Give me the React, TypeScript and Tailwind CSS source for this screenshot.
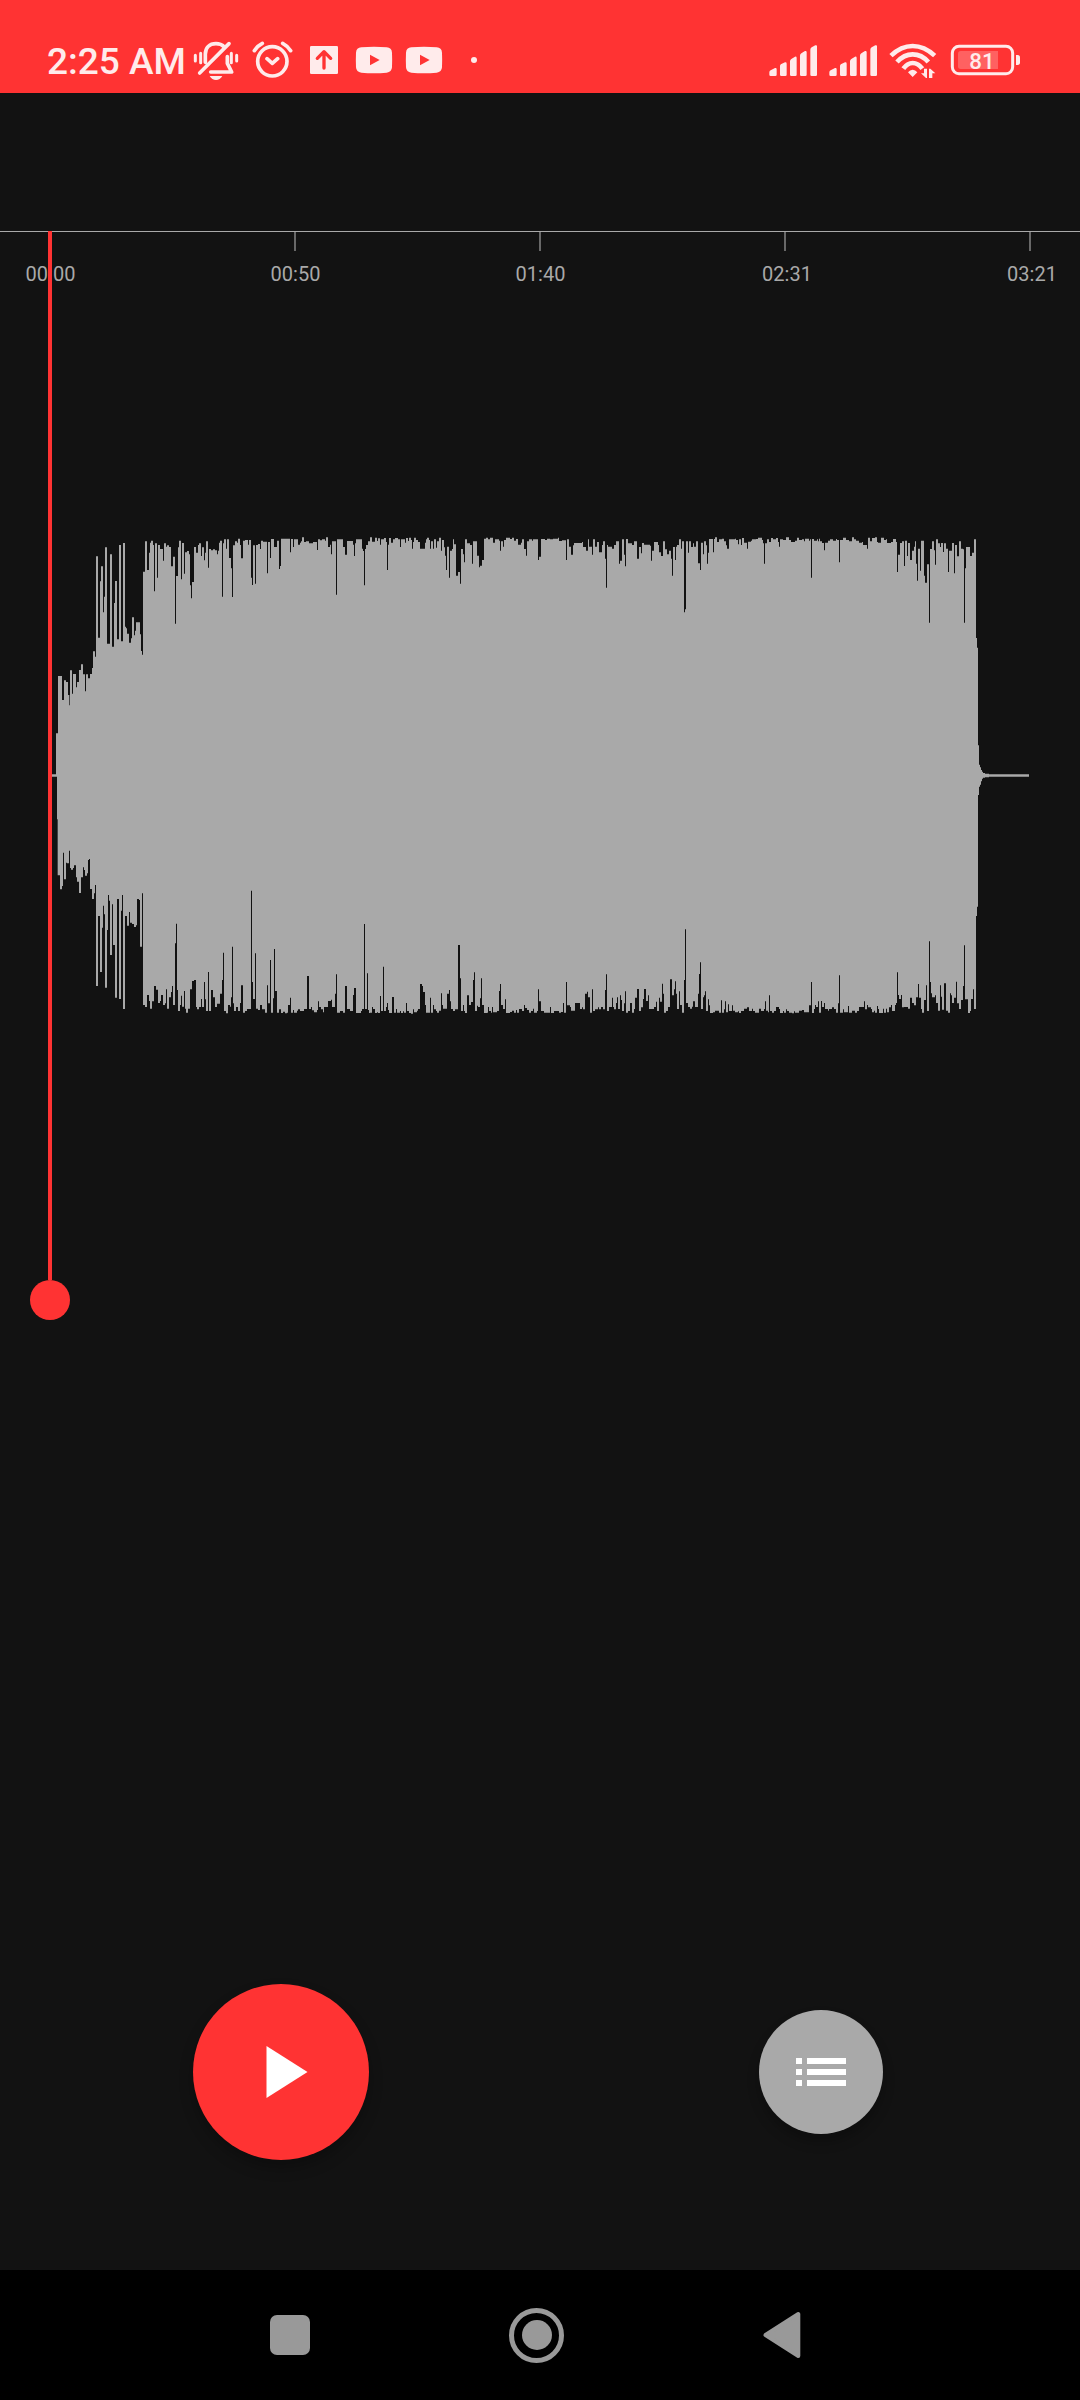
import type { ReactNode } from 'react';

// Envelope breakpoints as "x,level" pairs in thirds of a pixel; a level holds until the next pair.
const TOP: [number, string][] = [
  [0, `60,763 78,640 84,468 96,540 102,481 108,486 114,525 118,556 120,451 126,521 129,462 138,502 141,486 147,450 153,433 159,463 165,514 168,463 174,475 180,462 186,444 189,394 195,410 198,109 204,353 210,184 213,139 219,277 222,230 225,82 231,371 240,103 246,380 252,249 255,183 261,358 267,75 273,364 279,69 285,320 288,325 291,341 297,368 303,355 306,292 312,346 315,332 318,307 330,343 333,393 336,404 339,155 345,64 351,150 357,98 360,68 363,62 369,75 372,214 375,70 381,173 384,75 390,87 399,122 402,70 408,80 411,76 417,81 423,139 429,110 435,311 438,168 444,82 447,62 453,178 456,69 462,161 465,97 471,93 477,103 480,196 483,235 486,186 492,81 498,98 504,75 507,70 513,108 516,82 522,121 525,98 528,64 534,143 537,87 543,91 549,88 555,91 561,103 564,92 567,68 570,62 576,230 579,70 582,58 588,86 591,58 597,114 603,145 606,231 609,76 615,64 621,68 624,56 630,75 633,115 639,62 645,60 654,74 657,60 663,173 666,195 669,76 675,191 678,75 684,72 690,87 693,62 699,65 711,160 714,66 720,114 723,57 732,81 741,62 747,147 750,138 753,56 780,97 783,57 789,81 792,58 804,74 810,68 813,64 816,52 822,66 828,64 837,70 849,66 861,90 864,58 870,61 876,58 885,62 888,52 894,81 900,74 903,103 906,64 918,224 921,58 939,81 945,104 951,63 969,74 972,108 975,70 978,58 996,86 999,93 1002,196 1005,87 1008,75 1014,64`],
  [1020, `0,52 6,65 15,53 21,63 24,55 30,74 33,58 42,54 48,66 51,150 54,74 57,54 63,68 69,58 75,54 84,58 90,81 93,58 105,68 108,54 114,63 117,53 123,60 126,86 129,66 132,53 138,60 144,66 150,86 165,68 168,58 171,53 177,60 180,86 183,64 189,86 192,58 198,83 201,64 207,53 213,92 216,60 222,82 225,107 228,150 231,80 237,173 240,92 246,87 249,58 252,73 258,167 264,156 270,191 273,87 279,103 282,127 285,58 291,70 300,75 306,131 309,64 321,107 327,142 330,137 336,120 342,56 348,53 354,58 360,53 369,68 375,58 387,62 390,92 393,64 399,80 402,60 408,53 420,57 426,53 432,62 438,57 444,74 453,68 456,58 462,87 468,107 471,64 477,58 486,62 489,58 504,120 507,110 513,57 525,60 531,56 540,58 549,56 564,53 567,63 576,61 588,120 591,58 597,80 603,104 609,76 612,69 636,66 639,81 648,92 654,58 657,80 666,104 669,58 675,80 681,66 687,97 696,75 699,64 705,116 708,203 711,75 714,80 726,86 732,75 738,64 747,131 750,122 756,58 762,104 765,139 768,57 774,70 786,75 792,64 801,116 807,81 813,100 816,69 822,74 840,77 843,122 846,92 852,66 864,75 867,97 873,108 879,64 885,88 891,103 897,92 903,116 906,167 909,81 915,120 918,80 921,75 927,58 933,86 936,64 942,277 945,268 948,64 954,98 957,64 963,81 969,70 972,80 978,64 984,130`],
  [2010, `0,150 3,68 9,103 12,64 18,76 21,131 24,98 27,57 39,97 42,57 45,52 51,66 57,58 66,56 72,64 78,76 81,86 87,58 105,56 108,60 114,73 117,58 123,75 126,54 132,68 141,86 144,65 153,62 156,58 168,57 174,53 186,60 189,70 192,131 195,70 201,58 207,66 213,54 219,58 228,54 234,66 237,80 240,58 249,60 258,52 267,60 273,66 285,62 291,53 297,60 306,58 312,64 315,56 327,62 330,58 333,173 336,57 342,62 351,58 354,64 357,56 360,64 366,69 372,91 375,68 384,62 390,58 399,62 408,57 411,60 417,127 420,60 429,53 438,60 447,64 456,52 462,58 468,62 477,68 486,66 489,75 501,86 504,53 510,64 516,54 525,52 531,66 534,68 543,53 552,60 558,58 561,69 573,66 579,57 588,66 591,156 594,104 600,69 606,64 612,138 615,62 621,108 624,69 630,120 636,92 642,80 645,64 648,131 651,182 654,86 660,152 663,62 672,167 675,188 681,133 687,308 690,87 696,64 702,91 705,134 708,58 714,70 720,81 723,69 729,96 732,70 738,86 744,156 747,92 756,69 762,160 765,75 771,109 777,64 783,86 789,88 792,308 795,145 798,81 810,108 816,98 822,58 828,354 831,383 834,676 837,734 840,742 843,750 846,755 849,759 855,761 867,763 987,763`],
];
const BOTTOM: [number, string][] = [
  [0, `60,-10 81,118 83,286 90,328 96,318 99,218 102,298 108,248 111,250 117,212 120,264 123,269 129,264 132,256 138,292 141,305 147,339 153,292 159,262 162,270 165,287 171,280 174,240 177,237 180,327 186,357 192,340 195,315 198,618 204,408 210,576 216,443 219,377 222,403 225,623 231,450 234,345 237,362 240,525 246,373 249,495 255,653 261,357 267,657 273,392 276,345 279,687 285,408 291,437 297,396 300,428 306,432 312,441 318,436 321,357 327,360 330,500 336,340 339,675 345,681 351,645 357,663 360,686 366,664 372,618 378,629 384,669 390,663 393,645 399,675 405,670 408,628 411,686 417,652 423,636 426,618 429,675 435,490 438,431 441,630 444,693 450,675 453,647 456,680 462,633 465,686 468,698 474,686 480,628 486,603 492,600 498,681 501,688 507,681 513,657 516,681 522,606 525,658 528,693 534,576 537,693 543,630 549,652 555,681 561,671 570,641 576,600 579,518 582,693 588,700 594,675 600,680 603,652 606,500 609,670 612,693 618,681 624,693 630,669 633,616 639,698 645,693 651,687 663,332 666,606 669,657 675,520 678,686 684,690 690,675 696,688 705,698 711,616 714,670 720,540 723,698 729,655 732,507 735,633 741,698 747,688 753,699 759,695 765,700 771,698 774,675 780,653 783,698 789,690 792,698 801,692 804,688 810,693 822,687 831,588 837,687 843,681 846,691 852,697 861,690 864,664 867,681 873,688 879,697 882,681 894,663 903,659 906,681 915,641 918,583 921,698 930,693 939,698 945,618 951,687 960,693 969,645 972,624 978,699 993,693 996,687 1002,432 1005,687 1011,580 1014,690 1017,699`],
  [1020, `0,698 6,681 9,687 15,699 21,697 24,699 30,648 33,693 39,560 42,693 48,681 51,669 54,690 57,699 66,651 72,698 78,687 81,698 90,693 93,699 99,694 102,698 108,669 111,693 117,699 123,701 129,688 132,697 141,692 144,687 150,612 156,618 159,636 165,675 168,698 180,653 183,698 189,675 192,688 198,693 201,698 207,692 213,640 216,675 219,686 231,641 237,630 240,664 243,687 249,693 255,688 264,495 270,595 273,693 279,675 282,693 285,699 291,646 297,675 303,666 309,600 312,577 315,693 321,677 324,681 330,655 333,595 336,675 342,699 351,698 354,681 357,693 363,698 366,681 369,697 381,693 387,633 390,612 393,675 399,687 405,658 408,699 420,696 426,692 432,698 438,690 441,698 447,687 456,693 462,675 465,684 471,690 477,698 483,693 489,686 492,698 501,693 504,628 507,664 513,693 522,698 540,681 543,699 552,693 567,698 573,696 579,669 582,698 588,606 591,676 600,681 603,692 615,669 630,687 636,682 639,688 645,641 651,635 654,652 660,698 666,628 669,693 675,688 684,682 687,688 693,681 699,688 705,630 708,583 711,693 717,681 726,653 729,681 732,688 738,669 741,652 744,687 750,646 753,660 756,693 762,670 765,634 768,698 774,693 780,669 786,698 792,687 795,653 801,627 807,693 813,682 819,657 822,627 828,663 834,646 837,687 852,681 858,665 861,693 867,653 870,665 876,611 879,641 882,698 888,693 894,681 900,598 906,646 912,628 915,604 918,641 921,687 927,634 930,675 936,698 942,600 945,448 948,669 954,681 960,686 966,680 969,664 975,681 984,641 987,582`],
  [2010, `0,547 3,687 9,652 12,646 15,634 18,693 24,658 27,676 30,699 39,697 45,692 57,698 63,661 66,698 72,688 75,664 78,697 84,673 87,693 96,676 99,692 105,697 114,694 117,699 123,693 132,686 141,682 147,693 156,686 159,693 165,698 177,686 183,693 192,687 195,664 198,692 204,697 207,646 210,693 216,698 222,693 228,681 237,687 240,699 249,693 252,698 258,688 261,693 267,698 276,700 282,694 285,698 297,692 306,690 312,697 327,676 333,606 336,699 342,687 345,675 348,681 354,664 357,698 363,663 366,681 372,669 375,687 384,692 387,687 396,682 402,687 408,698 414,670 417,586 420,698 429,688 432,697 444,678 447,698 456,692 465,698 471,693 477,681 492,664 495,688 501,675 504,682 513,687 516,697 522,692 525,698 531,678 534,687 537,699 549,686 552,698 558,686 561,697 567,682 573,675 576,693 585,675 588,669 591,577 594,645 597,657 603,645 606,682 612,681 624,686 630,653 636,669 642,676 648,652 654,612 657,653 663,687 666,698 672,660 678,616 681,693 687,484 690,606 693,640 696,652 705,646 708,669 714,692 720,616 723,650 726,689 732,610 738,692 744,698 750,640 753,646 756,669 762,653 768,605 771,670 777,687 783,660 789,618 792,496 795,658 804,699 810,693 813,657 819,628 822,687 828,408 831,380 834,45 837,20 840,14 843,4 846,-4 849,-7 855,-8 867,-10 987,-10`],
];

function steps(blocks: [number, string][], dy: number): [number, number][] {
  const points: [number, number][] = [];
  for (const [offset, data] of blocks) {
    for (const pair of data.split(' ')) {
      const [x, y] = pair.split(',').map(Number);
      const last = points[points.length - 1];
      if (last) points.push([x + offset, last[1]]);
      points.push([x + offset, y + dy]);
    }
  }
  return points;
}

const WAVE = 'M' + [...steps(TOP, 0), ...steps(BOTTOM, 780).reverse()].map((p) => p.join(' ')).join('L') + 'Z';

function StatusIcon({ x, w, children }: { x: number; w: number; children: ReactNode }) {
  return (
    <svg className="shrink-0" width={w / 3} height={93} viewBox={`${x} 0 ${w} 279`} fill="currentColor">
      {children}
    </svg>
  );
}

const YOUTUBE =
  'M1084 142Q1122 139 1160 142Q1175 143 1176 158Q1177 180 1176 202Q1175 217 1160 218Q1122 221 1084 218Q1069 217 1068 202Q1067 180 1068 158Q1069 143 1084 142ZM1110 164V196L1139 180Z';
const SIGNAL =
  'M88 217Q88 213 92 211L105 204Q110 203 110 208V224Q110 228 106 228H92Q88 228 88 224ZM120 198Q120 194 124 192L135 187Q140 186 140 191V224Q140 228 136 228H124Q120 228 120 224ZM150 184Q150 179 154 177L165 170Q170 169 170 174V224Q170 228 166 228H154Q150 228 150 224ZM180 167Q180 162 184 160L195 153Q200 152 200 157V224Q200 228 196 228H184Q180 228 180 224ZM211 149Q211 144 215 142L226 136Q231 134 231 139V224Q231 228 227 228H215Q211 228 211 224Z';

function StatusBar() {
  return (
    <header className="flex h-[93px] shrink-0 bg-[#ff3333] text-[#ffebeb]">
      <div className="w-[191px] shrink-0 whitespace-nowrap pl-[47px] pt-[40px] text-[37px] font-medium leading-[44px]">2:25 AM</div>
      <StatusIcon x={573} w={156}>
        <g fill="none" stroke="currentColor" strokeWidth={11} strokeLinecap="round" strokeLinejoin="round">
          <path d="M599 219L687 131M616 187V163C616 143 628 131 648 131C658 131 666 134 672 140" />
          <path d="M682 170V190L695 216H632" />
          <path strokeWidth={9} d="M586 166V183M602 160V188M694 160V188M710 166V183" />
        </g>
        <path d="M629 228H667Q660 240 648 240Q636 240 629 228Z" />
      </StatusIcon>
      <StatusIcon x={729} w={171}>
        <g fill="none" stroke="currentColor" strokeWidth={11}>
          <circle cx={817} cy={184} r={44} />
          <path strokeLinecap="round" strokeLinejoin="round" d="M801 176L817 190L833 176M763 152Q772 138 787 130M872 152Q863 138 848 130" />
        </g>
      </StatusIcon>
      <StatusIcon x={900} w={144}>
        <rect x={930} y={138} width={84} height={84} rx={4} />
        <path className="text-[#ff3333]" fill="none" stroke="currentColor" strokeWidth={10} strokeLinecap="round" strokeLinejoin="round" d="M972 204V156M952 175L972 155L992 175" />
      </StatusIcon>
      <StatusIcon x={1044} w={150}>
        <path fillRule="evenodd" d={YOUTUBE} />
      </StatusIcon>
      <StatusIcon x={1044} w={150}>
        <path fillRule="evenodd" d={YOUTUBE} />
      </StatusIcon>
      <StatusIcon x={1344} w={156}>
        <circle cx={1422} cy={180} r={9} />
      </StatusIcon>
      <div className="ml-auto flex">
        <StatusIcon x={60} w={180}>
          <path d={SIGNAL} />
        </StatusIcon>
        <StatusIcon x={60} w={180}>
          <path d={SIGNAL} />
        </StatusIcon>
        <StatusIcon x={420} w={192}>
          <g fill="none" stroke="currentColor" strokeWidth={14}>
            <path d="M453 167Q483 138 518 138Q553 138 584 167M471 186Q492 163 518 163Q545 163 565 186M490 206Q502 189 518 189Q535 189 547 206" />
          </g>
          <path d="M504 217Q510 209 518 209Q526 209 532 217L518 231ZM552 206H561V234H558L543 220H552ZM567 206H571L586 220H577V234H567Z" />
        </StatusIcon>
        <StatusIcon x={612} w={408}>
          <rect x={637} y={139} width={181} height={82} rx={20} fill="none" stroke="currentColor" strokeWidth={9} />
          <path opacity={0.25} d="M662 153H774V207H662Q654 207 654 199V161Q654 153 662 153Z" />
          <path d="M828 165H833Q840 165 840 173V187Q840 195 833 195H828Z" />
          <text x={726} y={206} fontSize={67} fontWeight={500} textAnchor="middle">81</text>
        </StatusIcon>
      </div>
    </header>
  );
}

const MARKS = ['00:00', '00:50', '01:40', '02:31', '03:21'];

export default function App() {
  return (
    <div className="flex h-[2400px] w-[1080px] flex-col overflow-hidden bg-[#121212] font-['Roboto',sans-serif]">
      <StatusBar />
      <main className="relative mt-[138px] flex-1">
        <div className="h-px bg-[#a9a9a9]" />
        <div className="-ml-[73px] flex w-[1225px]">
          {MARKS.map((m) => (
            <div key={m} className="flex w-[245px] shrink-0 flex-col items-center">
              <div className="h-[19px] w-[2px] bg-[#686868]" />
              <div
                className={`mt-[11px] text-[20px] leading-[24px] text-[#a9a9a9] ${m.endsWith('1') ? 'pl-[5px]' : 'pl-[2px]'}`}
              >
                {m}
              </div>
            </div>
          ))}
        </div>
        <svg className="ml-[30px] mt-[234px] block" width={1000} height={500} viewBox="0 0 3000 1500">
          <path fill="#a9a9a9" d={WAVE} />
        </svg>
        <div className="absolute left-[30px] top-0 flex w-[40px] flex-col items-center">
          <div className="h-[1049px] w-[4px] bg-[#ff3333]" />
          <div className="size-[40px] rounded-full bg-[#ff3333]" />
        </div>
      </main>
      <div className="mb-[110px] flex shrink-0 items-center justify-between pl-[193px] pr-[197px]">
        <button className="flex size-[176px] items-center justify-center rounded-full bg-[#ff3333] shadow-[0_8px_14px_rgba(0,0,0,0.25)]">
          <svg className="ml-[11px]" width={42} height={52} viewBox="0 0 42 52">
            <path fill="#fff" d="M0.5 0V52L41.5 26Z" />
          </svg>
        </button>
        <button className="flex size-[124px] items-center justify-center rounded-full bg-[#a9a9a9] shadow-[0_8px_12px_rgba(0,0,0,0.25)]">
          <svg width={50} height={28} viewBox="0 0 50 28">
            <path fill="#fff" d="M0 0H6V6H0ZM0 11H6V17H0ZM0 22H6V28H0ZM11 0H50V6H11ZM11 11H50V17H11ZM11 22H50V28H11Z" />
          </svg>
        </button>
      </div>
      <nav className="flex h-[130px] shrink-0 items-center bg-black pl-[269.5px]">
        <div className="size-[40px] rounded-[7px] bg-[#999999]" />
        <div className="ml-[199.5px] flex size-[55px] items-center justify-center rounded-full border-[5px] border-[#999999]">
          <div className="size-[30px] rounded-full bg-[#999999]" />
        </div>
        <svg className="ml-[199px]" width={38} height={56} viewBox="0 0 38 56">
          <path fill="#999" stroke="#999" strokeWidth={4} strokeLinejoin="round" d="M2.5 28L35.3 7V49Z" />
        </svg>
      </nav>
    </div>
  );
}
